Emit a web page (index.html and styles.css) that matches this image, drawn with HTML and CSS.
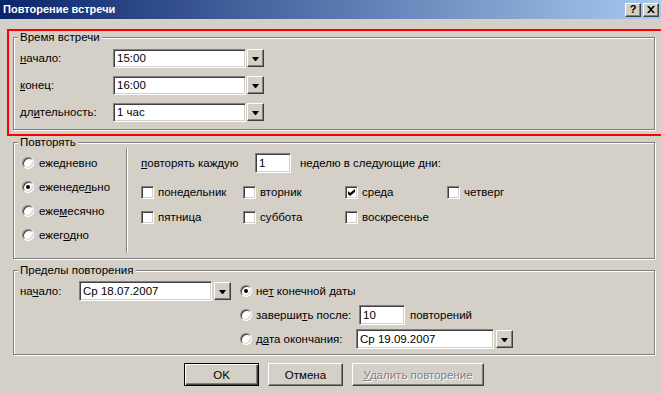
FILE: index.html
```html
<!DOCTYPE html>
<html lang="ru">
<head>
  <meta charset="UTF-8" />
  <title>Повторение встречи</title>
  <link rel="stylesheet" href="styles.css">
</head>
<body>

  <div class="window">
    <!-- Title bar -->
    <div class="titlebar">
      <span class="caption">Повторение встречи</span>
      <div class="caption-btns">
        <span class="cbtn cbtn-help">?</span>
        <span class="cbtn">
          <svg width="8" height="7" viewBox="0 0 8 7"><path d="M0 0h2l2 2 2-2h2L5 3.5 8 7H6L4 5 2 7H0l3-3.5z" fill="#000"/></svg>
        </span>
      </div>
    </div>

    <!-- Meeting time -->
    <div class="highlight">
      <fieldset class="group group-time">
        <legend>Время встречи</legend>
        <div class="time-row">
          <span class="time-label"><u>н</u>ачало:</span>
          <span class="edit time-edit">15:00</span>
          <span class="drop"></span>
        </div>
        <div class="time-row">
          <span class="time-label"><u>к</u>онец:</span>
          <span class="edit time-edit">16:00</span>
          <span class="drop"></span>
        </div>
        <div class="time-row">
          <span class="time-label">дл<u>и</u>тельность:</span>
          <span class="edit time-edit">1 час</span>
          <span class="drop"></span>
        </div>
      </fieldset>
    </div>

    <!-- Recurrence -->
    <fieldset class="group group-repeat">
      <legend>Повторять</legend>
      <div class="repeat-body">
        <div class="freq">
          <label class="radio-row"><span class="radio"></span><span>еже<u>д</u>невно</span></label>
          <label class="radio-row"><span class="radio checked"></span><span>еженеде<u>л</u>ьно</span></label>
          <label class="radio-row"><span class="radio"></span><span>еже<u>м</u>есячно</span></label>
          <label class="radio-row"><span class="radio"></span><span>ежег<u>о</u>дно</span></label>
        </div>
        <div class="separator"></div>
        <div class="repeat-days">
          <div class="every-row">
            <span class="every-label"><u>п</u>овторять каждую</span>
            <span class="edit every-edit">1</span>
            <span>неделю в следующие дни:</span>
          </div>
          <div class="days">
            <label class="check"><span class="box"></span><span>понедельник</span></label>
            <label class="check"><span class="box"></span><span>вторник</span></label>
            <label class="check"><span class="box checked">
              <svg width="7" height="7" viewBox="0 0 7 7"><path d="M0 2l2 2 5-4v3L2 7 0 5z" fill="#000"/></svg>
            </span><span>среда</span></label>
            <label class="check"><span class="box"></span><span>четверг</span></label>
            <label class="check"><span class="box"></span><span>пятница</span></label>
            <label class="check"><span class="box"></span><span>суббота</span></label>
            <label class="check"><span class="box"></span><span>воскресенье</span></label>
          </div>
        </div>
      </div>
    </fieldset>

    <!-- Range -->
    <fieldset class="group group-range">
      <legend>Пределы повторения</legend>
      <div class="range-body">
        <div class="range-start">
          <span class="start-label">на<u>ч</u>ало:</span>
          <span class="edit start-edit">Ср 18.07.2007</span>
          <span class="drop"></span>
        </div>
        <div class="range-end">
          <label class="radio-row"><span class="radio checked"></span><span>не<u>т</u> конечной даты</span></label>
          <div class="radio-row">
            <span class="radio"></span>
            <span class="end-label after-label">заверши<u>т</u>ь после:</span>
            <span class="edit count-edit">10</span>
            <span class="count-text">повторений</span>
          </div>
          <div class="radio-row">
            <span class="radio"></span>
            <span class="end-label date-label">д<u>а</u>та окончания:</span>
            <span class="edit end-edit">Ср 19.09.2007</span>
            <span class="drop"></span>
          </div>
        </div>
      </div>
    </fieldset>

    <!-- Buttons -->
    <div class="buttons">
      <button class="btn btn-default">OK</button>
      <button class="btn">Отмена</button>
      <button class="btn btn-wide" disabled><u>У</u>далить повторение</button>
    </div>
  </div>

</body>
</html>
```

FILE: styles.css
```css
body {
  margin: 0;
  padding: 0;
  font-family: "Liberation Sans", Arial, sans-serif;
  font-size: 11.5px;
  line-height: 13px;
  color: #000;
  background: #d4d0c8;
}

.window {
  width: 661px;
  height: 394px;
  background: #d4d0c8;
  overflow: hidden;
}

u {
  text-decoration: underline;
  text-underline-offset: 1px;
}

/* title bar */

.titlebar {
  height: 19px;
  display: flex;
  align-items: center;
  justify-content: space-between;
  padding: 0 2px 0 3px;
  background: linear-gradient(to right, #0a246a, #a6caf0);
}

.caption {
  color: #fff;
  font-weight: bold;
  font-size: 11px;
}

.caption-btns {
  display: flex;
  gap: 2px;
}

.cbtn {
  width: 16px;
  height: 14px;
  box-sizing: border-box;
  display: flex;
  align-items: center;
  justify-content: center;
  background: #d4d0c8;
  border: 1px solid;
  border-color: #fff #404040 #404040 #fff;
  box-shadow: inset -1px -1px 0 #808080;
}

.cbtn-help {
  font-weight: bold;
  font-size: 11px;
  line-height: 11px;
}

/* group boxes */

.highlight {
  margin: 10px 0 0 7px;
  width: 650px;
  border: 2px solid #f00;
  padding: 0 0 4px 4px;
}

.group {
  margin: 0 0 0 13px;
  min-width: 0;
  width: 642px;
  box-sizing: border-box;
  border: 1px solid #808080;
  box-shadow: 1px 1px 0 #fff, inset 1px 1px 0 #fff;
  padding: 0 0 0 6px;
}

.group legend {
  margin-left: -2px;
  padding: 0 2px;
  line-height: 13px;
  background: #d4d0c8;
}

/* sunken edits and drop buttons */

.edit {
  display: flex;
  align-items: center;
  box-sizing: border-box;
  height: 20px;
  padding-left: 3px;
  background: #fff;
  border: 1px solid;
  border-color: #808080 #fff #fff #808080;
  box-shadow: inset 1px 1px 0 #404040, inset -1px -1px 0 #d4d0c8;
  white-space: nowrap;
}

.drop {
  width: 17px;
  height: 18px;
  box-sizing: border-box;
  margin-left: 1px;
  display: flex;
  align-items: center;
  justify-content: center;
  border: 1px solid;
  border-color: #fff #404040 #404040 #fff;
  box-shadow: inset -1px -1px 0 #808080;
}

.drop::after {
  content: "";
  width: 1px;
  height: 0;
  border-top: 4px solid #000;
  border-left: 3px solid transparent;
  border-right: 3px solid transparent;
  margin-top: 1px;
}

/* meeting time */

.group-time {
  margin-left: 0;
  padding-top: 5px;
  padding-bottom: 7px;
}

.time-row {
  display: flex;
  align-items: flex-start;
  height: 19px;
  margin-bottom: 8px;
}

.time-row:last-child {
  margin-bottom: 0;
}

.time-label {
  width: 93px;
  line-height: 19px;
}

.time-edit {
  width: 133px;
  height: 19px;
}

/* radios and checkboxes */

.radio-row {
  display: flex;
  align-items: center;
  height: 24px;
  white-space: nowrap;
}

.radio {
  position: relative;
  width: 12px;
  height: 12px;
  box-sizing: border-box;
  flex-shrink: 0;
  margin-right: 5px;
  border-radius: 50%;
  background: #fff;
  border: 1px solid;
  border-color: #808080 #fff #fff #808080;
  box-shadow: inset 1px 1px 0 #404040, inset -1px -1px 0 #d4d0c8;
}

.radio.checked::after {
  content: "";
  position: absolute;
  left: 3px;
  top: 3px;
  width: 4px;
  height: 4px;
  border-radius: 50%;
  background: #000;
}

.check {
  display: flex;
  align-items: center;
  white-space: nowrap;
}

.box {
  width: 13px;
  height: 13px;
  box-sizing: border-box;
  flex-shrink: 0;
  margin-right: 4px;
  display: flex;
  align-items: center;
  justify-content: center;
  background: #fff;
  border: 1px solid;
  border-color: #808080 #fff #fff #808080;
  box-shadow: inset 1px 1px 0 #404040, inset -1px -1px 0 #d4d0c8;
}

/* recurrence */

.group-repeat {
  padding-top: 2px;
  padding-bottom: 11px;
}

.repeat-body {
  display: flex;
}

.freq {
  width: 106px;
  padding-left: 2px;
  box-sizing: border-box;
}

.separator {
  width: 1px;
  margin: -3px 0 -6px;
  background: #808080;
  border-right: 1px solid #fff;
}

.repeat-days {
  padding-left: 13px;
}

.every-row {
  display: flex;
  align-items: center;
  height: 24px;
  white-space: nowrap;
}

.every-label {
  width: 114px;
}

.every-edit {
  width: 36px;
  margin-right: 9px;
}

.days {
  display: grid;
  grid-template-columns: repeat(4, 102px);
  grid-auto-rows: 25px;
  margin-top: 5px;
}

/* range */

.group-range {
  margin-top: 5px;
  padding-top: 2px;
  padding-bottom: 3px;
}

.range-body {
  display: flex;
}

.range-start {
  width: 220px;
  height: 24px;
  display: flex;
  align-items: center;
}

.start-label {
  width: 59px;
}

.start-edit {
  width: 133px;
}

.range-start .drop,
.range-end .drop {
  margin-left: 2px;
}

.range-end .radio {
  margin-right: 4px;
}

.after-label {
  width: 103px;
}

.date-label {
  width: 100px;
}

.count-edit {
  width: 46px;
}

.count-text {
  margin-left: 5px;
}

.end-edit {
  width: 138px;
}

/* buttons */

.buttons {
  display: flex;
  gap: 9px;
  margin-top: 8px;
  padding-left: 184px;
}

.btn {
  width: 75px;
  height: 23px;
  padding: 0;
  font-family: inherit;
  font-size: 11.5px;
  color: #000;
  background: #d4d0c8;
  border: 1px solid;
  border-color: #fff #404040 #404040 #fff;
  box-shadow: inset -1px -1px 0 #808080;
  border-radius: 0;
}

.btn-default {
  border-color: #000;
  box-shadow: inset 1px 1px 0 #fff, inset -1px -1px 0 #404040, inset -2px -2px 0 #808080;
}

.btn-wide {
  width: 132px;
}

.btn:disabled {
  color: #808080;
  text-shadow: 1px 1px 0 #fff;
}
```
